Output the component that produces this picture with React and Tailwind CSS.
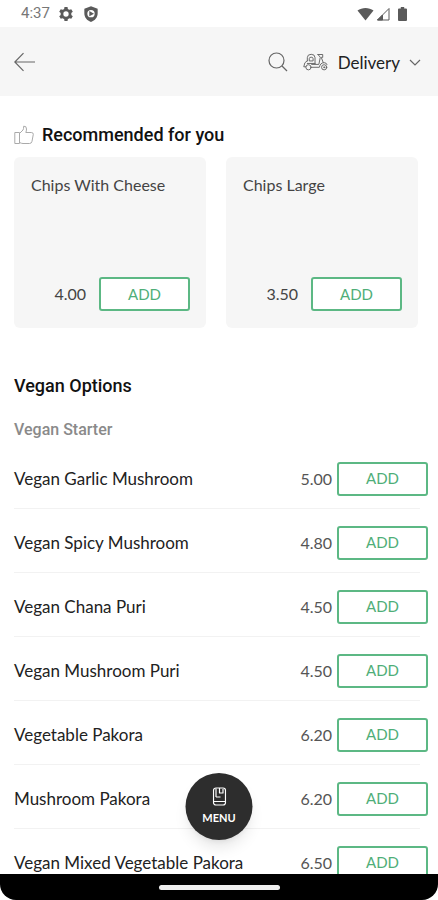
import React from 'react';

const RECOMMENDED = [
  { name: 'Chips With Cheese', price: '4.00' },
  { name: 'Chips Large', price: '3.50' },
];

const STARTERS = [
  { name: 'Vegan Garlic Mushroom', price: '5.00' },
  { name: 'Vegan Spicy Mushroom', price: '4.80' },
  { name: 'Vegan Chana Puri', price: '4.50' },
  { name: 'Vegan Mushroom Puri', price: '4.50' },
  { name: 'Vegetable Pakora', price: '6.20' },
  { name: 'Mushroom Pakora', price: '6.20' },
  { name: 'Vegan Mixed Vegetable Pakora', price: '6.50' },
];

const StatusBar = () => (
  <div className="flex h-[27px] shrink-0 items-center justify-between pr-[31px] pl-[21px] text-[#5a5a5a]">
    <div className="flex items-center gap-2">
      <span className="w-[29px] font-['Roboto',sans-serif] text-[15px] text-[#777]">4:37</span>
      <svg className="size-4" viewBox="0 0 24 24" fill="currentColor" aria-hidden="true">
        <path
          fillRule="evenodd"
          d="M19.9 13.500a8 8 0 0 0 0-3l2.300-1.800-2.300-4-2.700 1.100a8 8 0 0 0-2.400-1.400L14.300 1.500H9.700l-.5 2.900a8 8 0 0 0-2.400 1.400L4.100 4.700l-2.300 4 2.300 1.800a8 8 0 0 0 0 3l-2.300 1.800 2.300 4 2.700-1.100a8 8 0 0 0 2.400 1.400l.5 2.900h4.600l.5-2.900a8 8 0 0 0 2.400-1.400l2.700 1.100 2.300-4zM12 16a4 4 0 1 1 0-8 4 4 0 0 1 0 8z"
        />
      </svg>
      <svg className="ml-px size-4" viewBox="0 0 24 24" fill="currentColor" aria-hidden="true">
        <path
          fillRule="evenodd"
          d="M12 .5 2 4V11c0 6 4 11 10 13 6-2 10-7 10-13V4zM12 6a5.500 5.500 0 1 1 0 11 5.500 5.500 0 0 1 0-11z"
        />
        <path d="m9.500 7.500 7 4-7 4z" />
      </svg>
    </div>
    <div className="flex items-center">
      <svg className="h-[14px] w-[17px]" viewBox="0 0 17 14" fill="currentColor" aria-hidden="true">
        <path d="M8.500 13.500.5 3.500C5 0 12 0 16.500 3.500z" />
      </svg>
      <svg className="ml-[2px] size-[14px]" viewBox="0 0 14 14" fill="none" stroke="currentColor" aria-hidden="true">
        <path d="M13 1.500v11.500H1.500z" />
        <path d="M6.500 8v5h-5z" fill="currentColor" />
      </svg>
      <svg className="ml-2 h-[14px] w-[9px]" viewBox="0 0 9 14" fill="currentColor" aria-hidden="true">
        <path d="M2.800 0h3.400v1.500H8q1 0 1 1V13q0 1-1 1H1q-1 0-1-1V2.500q0-1 1-1h1.800z" />
      </svg>
    </div>
  </div>
);

const ScooterIcon = () => (
  <svg
    className="h-[18px] w-[25px]"
    viewBox="0 0 26 18"
    fill="none"
    stroke="currentColor"
    strokeLinecap="round"
    strokeLinejoin="round"
    aria-hidden="true"
  >
    <path d="M4.500 8V4.500q0-3.500 4-3.500t4 3.500V11M6.500 7.500V5.500q0-1.500 2-1.500t2 1.500v2z" />
    <path d="M4.500 7.500q-3.500 1.500-3.700 6.500h2M4.500 10.500h8" />
    <path d="M8.500 14.500h8.500q1-4.800 5-4.800 2.500 0 3 2" />
    <path d="M15.500 1.200h5v3h-1.500L21 9.500M15.500 1.200 18 4l-1.500 7.500H9" />
    <circle cx="5.700" cy="14.500" r="2.700" />
    <circle cx="22" cy="14.500" r="2.700" />
    <circle cx="22" cy="14.500" r=".6" />
  </svg>
);

const Header = () => (
  <header className="flex h-[69px] shrink-0 items-center bg-[#f6f6f6] pr-4 pl-[14px] text-[#666]">
    <button type="button" aria-label="Back">
      <svg className="h-5 w-[22px]" viewBox="0 0 22 20" fill="none" stroke="currentColor" strokeWidth="1.200" aria-hidden="true">
        <path d="M21 10H1M9.500 1.200.8 10l8.700 8.800" />
      </svg>
    </button>
    <button type="button" aria-label="Search" className="ml-auto">
      <svg className="size-5" viewBox="0 0 20 20" fill="none" stroke="currentColor" strokeWidth="1.200" aria-hidden="true">
        <circle cx="8.500" cy="8.500" r="7.500" />
        <path d="m14 14 5 5" />
      </svg>
    </button>
    <button type="button" className="ml-[15px] flex items-center">
      <ScooterIcon />
      <span className="ml-[10px] pt-[2px] font-['Lato',sans-serif] text-[17px] leading-6 text-[#222]">Delivery</span>
      <svg className="ml-2 h-3 w-3.5" viewBox="0 0 14 12" fill="none" stroke="currentColor" strokeWidth="1.200" aria-hidden="true">
        <path d="m2 4 5 5 5-5" />
      </svg>
    </button>
  </header>
);

const AddButton = ({ name }) => (
  <button
    type="button"
    aria-label={`ADD ${name}`}
    className="h-[34px] w-[91px] shrink-0 rounded-[3px] border-2 border-[#5cb884] bg-white text-[15px] text-[#4fae78]"
  >
    ADD
  </button>
);

const RecommendedCard = ({ name, price }) => (
  <article className="flex h-[171px] flex-col justify-between rounded-md bg-[#f6f6f6] pt-4 pr-4 pb-[17px] pl-[17px]">
    <h3 className="text-[16px] leading-6 text-[#444]">{name}</h3>
    <div className="flex items-center justify-end gap-[13px]">
      <span className="text-[16px] text-[#444]">{price}</span>
      <AddButton name={name} />
    </div>
  </article>
);

const MenuRow = ({ name, price }) => (
  <li className="pb-1">
    <div className="flex h-[59px] items-center">
      <span className="flex-1 text-[17px] text-[#222]">{name}</span>
      <span className="pr-[5px] text-[16px] text-[#555]">{price}</span>
      <AddButton name={name} />
    </div>
    <div className="mr-2 h-px bg-[#f2f2f2]" />
  </li>
);

const App = () => (
  <div className="relative flex h-screen flex-col overflow-hidden rounded-b-2xl bg-white font-['Lato',sans-serif]">
    <StatusBar />
    <Header />

    <main className="min-h-0 flex-1 overflow-hidden">
      <section className="pt-[27px] pr-5 pl-[14px]">
        <h2 className="flex items-center gap-2 font-['Roboto',sans-serif] text-[18px] leading-6 font-medium text-[#111]">
          <svg className="size-5" viewBox="0 0 20 20" fill="none" stroke="#aaa" strokeLinejoin="round" aria-hidden="true">
            <path d="M.8 7.500h4.700v11H.8zM5.500 8.500 9 5q.7-1 .7-3.800Q12.500.8 12.500 4q0 2-.7 3.500h5.500q2 0 2 1.800l-1.300 7q-.4 2.200-2.500 2.200H9q-1.500 0-3.500-1" />
          </svg>
          Recommended for you
        </h2>
        <div className="mt-[10px] grid grid-cols-2 gap-5">
          {RECOMMENDED.map((item) => (
            <RecommendedCard key={item.name} {...item} />
          ))}
        </div>
      </section>

      <section className="mt-[46px] pr-[10px] pl-[14px]">
        <h2 className="font-['Roboto',sans-serif] text-[18px] leading-6 font-medium text-[#111]">Vegan Options</h2>
        <h3 className="mt-5 font-['Roboto',sans-serif] text-[16px] leading-6 font-medium text-[#8a8a8a]">Vegan Starter</h3>
        <ul className="mt-[7px]">
          {STARTERS.map((item) => (
            <MenuRow key={item.name} {...item} />
          ))}
        </ul>
      </section>
    </main>

    {/* Home indicator */}
    <div className="flex h-[26px] shrink-0 items-center justify-center bg-black">
      <div className="h-[5px] w-[121px] rounded-full bg-[#eee]" />
    </div>

    <button
      type="button"
      className="absolute bottom-[60px] left-1/2 flex size-[67px] -translate-x-1/2 flex-col items-center justify-center gap-1 rounded-full bg-[#2d2d2d] text-white shadow-lg"
    >
      <svg className="h-[19px] w-[14px]" viewBox="0 0 14 19" fill="none" stroke="currentColor" strokeWidth="1.200" strokeLinejoin="round" aria-hidden="true">
        <rect x="1" y="1" width="12" height="17" rx="2.500" />
        <path d="M7 1v5h3.500V2M3.500 10H8M1 14.500h12M3.500 1.500v8.500" />
      </svg>
      <span className="text-[11px] leading-4 font-bold">MENU</span>
    </button>
  </div>
);

export default App;
